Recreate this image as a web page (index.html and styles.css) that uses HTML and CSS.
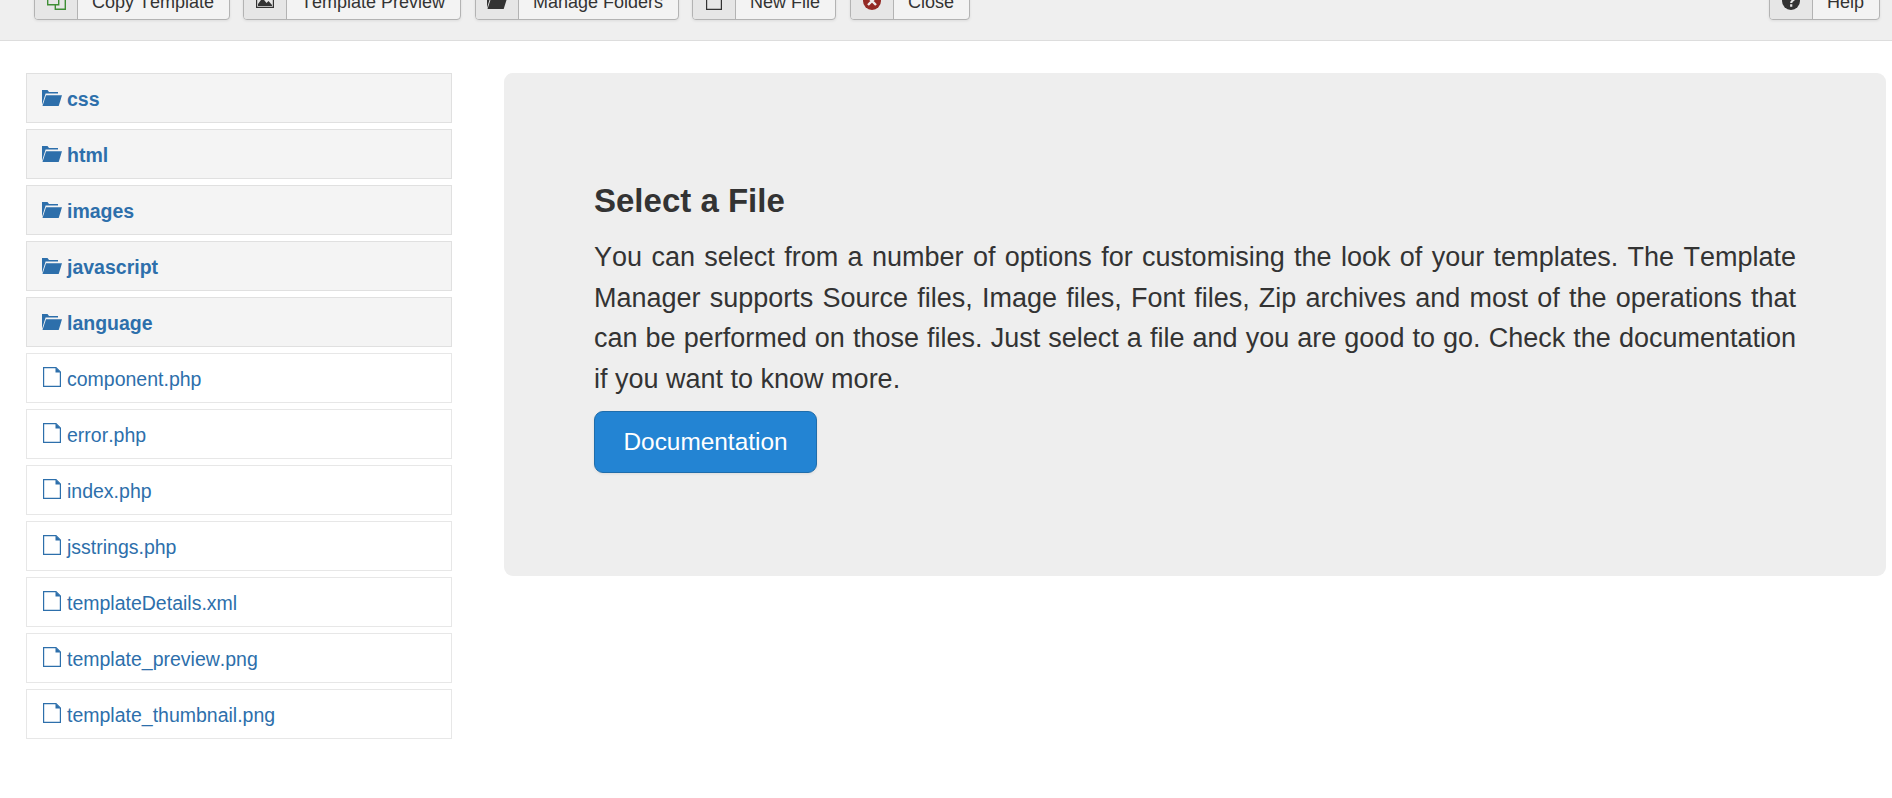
FILE: index.html
```html
<!DOCTYPE html>
<html lang="en">
<head>
<meta charset="utf-8">
<title>Templates: Customise</title>
<link rel="stylesheet" href="styles.css">
</head>
<body>
<svg class="sprite" aria-hidden="true">
  <symbol id="folder" viewBox="0 0 20 16"><path d="M0 15V0h5.500l1.500 2h9v1.400H3.600z"/><path d="M4 5.300H20L16.700 16H.5z"/></symbol>
  <symbol id="file" viewBox="0 0 18 20"><path d="M.6.600H13L17.400 5V19.400H.6z" fill="none" stroke="currentColor" stroke-width="1.200"/><path d="M12.500.600 17.400 5.500H12.500z"/></symbol>
</svg>
<header class="toolbar">
  <button class="tool tool-copy"><span class="tool-icon"><svg width="19" height="18" viewBox="0 0 19 18"><path d="M.7.700h11v12H.7zM12 6h6.300v11.300h-10V13" fill="none" stroke="#3e8e35" stroke-width="1.400"/></svg></span><span class="tool-label">Copy Template</span></button>
  <button class="tool tool-preview"><span class="tool-icon icon-raised"><svg width="18" height="16" viewBox="0 0 18 16"><path d="M.6.600h16.800v14.800H.6z" fill="none" stroke="#333" stroke-width="1.200"/><path d="M2 14v-2l4.500-6 4 5 2-2L16 13v1z"/></svg></span><span class="tool-label">Template Preview</span></button>
  <button class="tool tool-folders"><span class="tool-icon"><svg width="20" height="16"><use href="#folder"/></svg></span><span class="tool-label">Manage Folders</span></button>
  <button class="tool tool-new"><span class="tool-icon"><svg width="16" height="18" viewBox="0 0 16 18"><path d="M.6.600h14.800v16.800H.6z" fill="none" stroke="#333" stroke-width="1.200"/></svg></span><span class="tool-label">New File</span></button>
  <button class="tool tool-close"><span class="tool-icon"><svg width="18" height="18" viewBox="0 0 18 18"><circle cx="9" cy="9" r="9" fill="#942a25"/><path d="M5 5l8 8M13 5l-8 8" stroke="#eee" stroke-width="2.400"/></svg></span><span class="tool-label">Close</span></button>
  <button class="tool tool-help"><span class="tool-icon"><svg width="18" height="18" viewBox="0 0 18 18"><circle cx="9" cy="9" r="9"/><path d="M6 6.500C6 2.500 12.200 3 12.200 6.500 12.200 8.500 9.200 8.500 9.200 11M9.200 12.300v2.400" fill="none" stroke="#e6e6e6" stroke-width="2.200"/></svg></span><span class="tool-label">Help</span></button>
</header>
<main class="content">
  <ul class="tree">
    <li class="node folder"><svg class="node-icon"><use href="#folder"/></svg>css</li>
    <li class="node folder"><svg class="node-icon"><use href="#folder"/></svg>html</li>
    <li class="node folder"><svg class="node-icon"><use href="#folder"/></svg>images</li>
    <li class="node folder"><svg class="node-icon"><use href="#folder"/></svg>javascript</li>
    <li class="node folder"><svg class="node-icon"><use href="#folder"/></svg>language</li>
    <li class="node file"><svg class="node-icon"><use href="#file"/></svg>component.php</li>
    <li class="node file"><svg class="node-icon"><use href="#file"/></svg>error.php</li>
    <li class="node file"><svg class="node-icon"><use href="#file"/></svg>index.php</li>
    <li class="node file"><svg class="node-icon"><use href="#file"/></svg>jsstrings.php</li>
    <li class="node file"><svg class="node-icon"><use href="#file"/></svg>templateDetails.xml</li>
    <li class="node file"><svg class="node-icon"><use href="#file"/></svg>template_preview.png</li>
    <li class="node file"><svg class="node-icon"><use href="#file"/></svg>template_thumbnail.png</li>
  </ul>
  <section class="hero">
    <h2 class="hero-title">Select a File</h2>
    <p class="hero-text">You can select from a number of options for customising the look of your templates. The Template Manager supports Source files, Image files, Font files, Zip archives and most of the operations that can be performed on those files. Just select a file and you are good to go. Check the documentation if you want to know more.</p>
    <button class="hero-button">Documentation</button>
  </section>
</main>
</body>
</html>
```
FILE: styles.css
```css
* { box-sizing: border-box; }
body {
  margin: 0;
  height: 798px;
  overflow: hidden;
  background: #fff;
  color: #333;
  font-family: "Liberation Sans", Arial, sans-serif;
  font-kerning: none;
}
button { font-family: inherit; font-kerning: none; padding: 0; }
.sprite { display: none; }
.toolbar {
  display: flex;
  align-items: flex-end;
  height: 41px;
  padding: 0 12px 20px 34px;
  background: #efefef;
  border-bottom: 1px solid #ddd;
  overflow: hidden;
}
.tool {
  display: flex;
  flex: none;
  height: 39px;
  margin-right: 13px;
  border: 1px solid #b3b3b3;
  border-radius: 4px;
  background: #f3f3f3;
  color: #333;
  font-size: 18px;
  line-height: 37px;
  box-shadow: 0 1px 3px rgba(0, 0, 0, .08);
}
.tool-copy { width: 196px; }
.tool-preview { width: 218px; margin-right: 14px; }
.tool-folders { width: 204px; }
.tool-new { width: 144px; margin-right: 14px; }
.tool-close { width: 120px; }
.tool-help { width: 111px; margin: 0 0 0 auto; }
.tool-icon {
  display: flex;
  align-items: center;
  justify-content: center;
  width: 43px;
  height: 37px;
  background: #e6e6e6;
  border-right: 1px solid #b3b3b3;
  border-radius: 3px 0 0 3px;
}
.tool-icon svg { fill: #333; }
.icon-raised { padding-bottom: 2px; }
.tool-label { flex: 1; padding: 2px 0 0 14px; text-align: left; line-height: 37px; }
.content {
  display: flex;
  align-items: flex-start;
  gap: 52px;
  padding: 32px 6px 0 26px;
}
.tree {
  display: flex;
  flex-direction: column;
  gap: 6px;
  width: 426px;
  margin: 0;
  padding: 0;
  list-style: none;
}
.node {
  display: flex;
  align-items: center;
  gap: 5px;
  height: 50px;
  padding: 2px 15px 0;
  border: 1px solid #e7e7e7;
  color: #2d6fab;
  font-size: 19.5px;
  line-height: 27px;
}
.node-icon {
  width: 20px;
  height: 16px;
  margin-bottom: 2px;
  fill: currentColor;
}
.folder { background: #f4f4f4; border-color: #e0e0e0; font-weight: bold; }
.file .node-icon { height: 20px; margin-bottom: 5px; }
.hero {
  flex: 1;
  height: 503px;
  padding: 107px 90px 0;
  border-radius: 9px;
  background: #eee;
}
.hero-title { margin: 0 0 15px; font-size: 33px; line-height: 42px; }
.hero-text { margin: 0 0 12px; font-size: 27px; line-height: 40.5px; text-align: justify; }
.hero-button {
  display: block;
  width: 223px;
  height: 62px;
  border: 1px solid #1f6dab;
  border-radius: 9px;
  background: #2384d3;
  color: #fff;
  font-size: 24.4px;
  box-shadow: 0 1px 3px rgba(0, 0, 0, .08);
}
```
